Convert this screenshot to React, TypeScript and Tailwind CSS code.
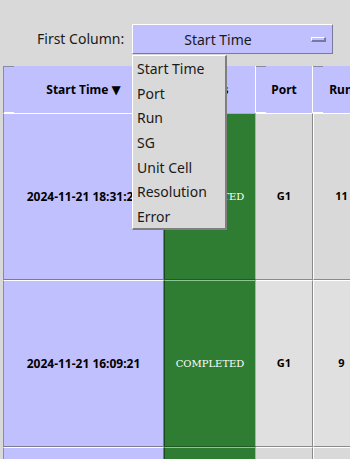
import React from 'react'

const SANS = { fontFamily: '"Noto Sans", "DejaVu Sans", sans-serif' }

const rows = [
  { time: '2024-11-21 18:31:21', status: 'COMPLETED', port: 'G1', run: '11' },
  { time: '2024-11-21 16:09:21', status: 'COMPLETED', port: 'G1', run: '9' },
  { time: '2024-11-21 14:02:47', status: 'COMPLETED', port: 'G1', run: '8' },
]

const options = ['Start Time', 'Port', 'Run', 'SG', 'Unit Cell', 'Resolution', 'Error']

function HeaderCell({ label, first }: { label: string; first?: boolean }) {
  return (
    <div
      className={
        'relative flex items-center justify-center h-[47px] bg-[#c0c0ff] text-[12px] font-bold text-black border-r border-white ' +
        (first ? 'border-l border-l-[#8a8aa0]' : '')
      }
    >
      <span className="absolute left-0 top-0 h-px w-[10px] bg-[#8a8aa0]" />
      <span className="absolute left-0 bottom-0 h-px w-[10px] bg-white" />
      <span className="whitespace-nowrap">{label}</span>
    </div>
  )
}

export default function App() {
  return (
    <div className="relative w-[350px] h-[459px] overflow-hidden bg-[#d9d9d9]" style={SANS}>
      {/* top bar */}
      <div className="h-[66px] flex items-start pt-[24px] pl-[37px]">
        <span className="text-[14px] leading-[30px] text-[#1a1a1a] w-[95px]">First Column:</span>
        <div className="flex items-center w-[201px] h-[30px] bg-[#c0c0ff] border-t border-l border-white border-b border-r border-b-[#7a7a98] border-r-[#7a7a98]">
          <span className="flex-1 text-center text-[14px] text-[#1a1a1a] pr-[8px]">Start Time</span>
          <span className="w-[15px] h-[5px] mr-[6px] bg-[#c0c0ff] border-t border-l border-white border-b-2 border-r-2 border-b-[#7a7a98] border-r-[#7a7a98]" />
        </div>
      </div>

      {/* table */}
      <div className="pl-[3px] w-[372px]">
        <div className="grid grid-cols-[161px_92px_57px_57px]">
          <HeaderCell label="Start Time ▼" first />
          <HeaderCell label="Status" />
          <HeaderCell label="Port" />
          <HeaderCell label="Run" />
        </div>
        {rows.map((r, i) => {
          const grey = i % 2 === 0 ? 'bg-[#d9d9d9]' : 'bg-[#e0e0e0]'
          return (
            <div key={i} className="grid grid-cols-[161px_92px_57px_57px] h-[167px]">
              <div className="flex items-center justify-center bg-[#c0c0ff] border-t border-t-white border-l border-l-[#8a8aa0] border-b border-b-[#7a7a92] border-r border-r-[#7a7a92] text-[12px] font-bold text-black whitespace-nowrap">
                {r.time}
              </div>
              <div
                className="flex items-center justify-center bg-[#2e7d32] border-t border-t-[#8fc493] border-l border-l-[#1b4a1e] border-b border-b-[#1f5a23] border-r border-r-[#8fc493] text-[10px] text-white"
                style={{ fontFamily: '"DejaVu Serif", "Liberation Serif", serif' }}
              >
                {r.status}
              </div>
              <div className={'flex items-center justify-center border-t border-t-white border-b border-b-[#8a8a8a] border-r border-r-[#8a8a8a] text-[11px] font-bold text-black ' + grey}>
                {r.port}
              </div>
              <div className={'flex items-center justify-center border-t border-t-white border-l border-l-white border-b border-b-[#8a8a8a] border-r border-r-[#8a8a8a] text-[11px] font-bold text-black ' + grey}>
                {r.run}
              </div>
            </div>
          )
        })}
      </div>

      {/* dropdown popup */}
      <div className="absolute left-[132px] top-[55px] w-[95px] h-[175px] bg-[#d9d9d9] border-t border-l border-white border-b-2 border-r-2 border-b-[#7f7f7f] border-r-[#7f7f7f]">
        {options.map((o) => (
          <div key={o} className="h-[24.7px] flex items-center pl-[4px] text-[14px] text-[#1a1a1a] whitespace-nowrap">
            {o}
          </div>
        ))}
      </div>
    </div>
  )
}
